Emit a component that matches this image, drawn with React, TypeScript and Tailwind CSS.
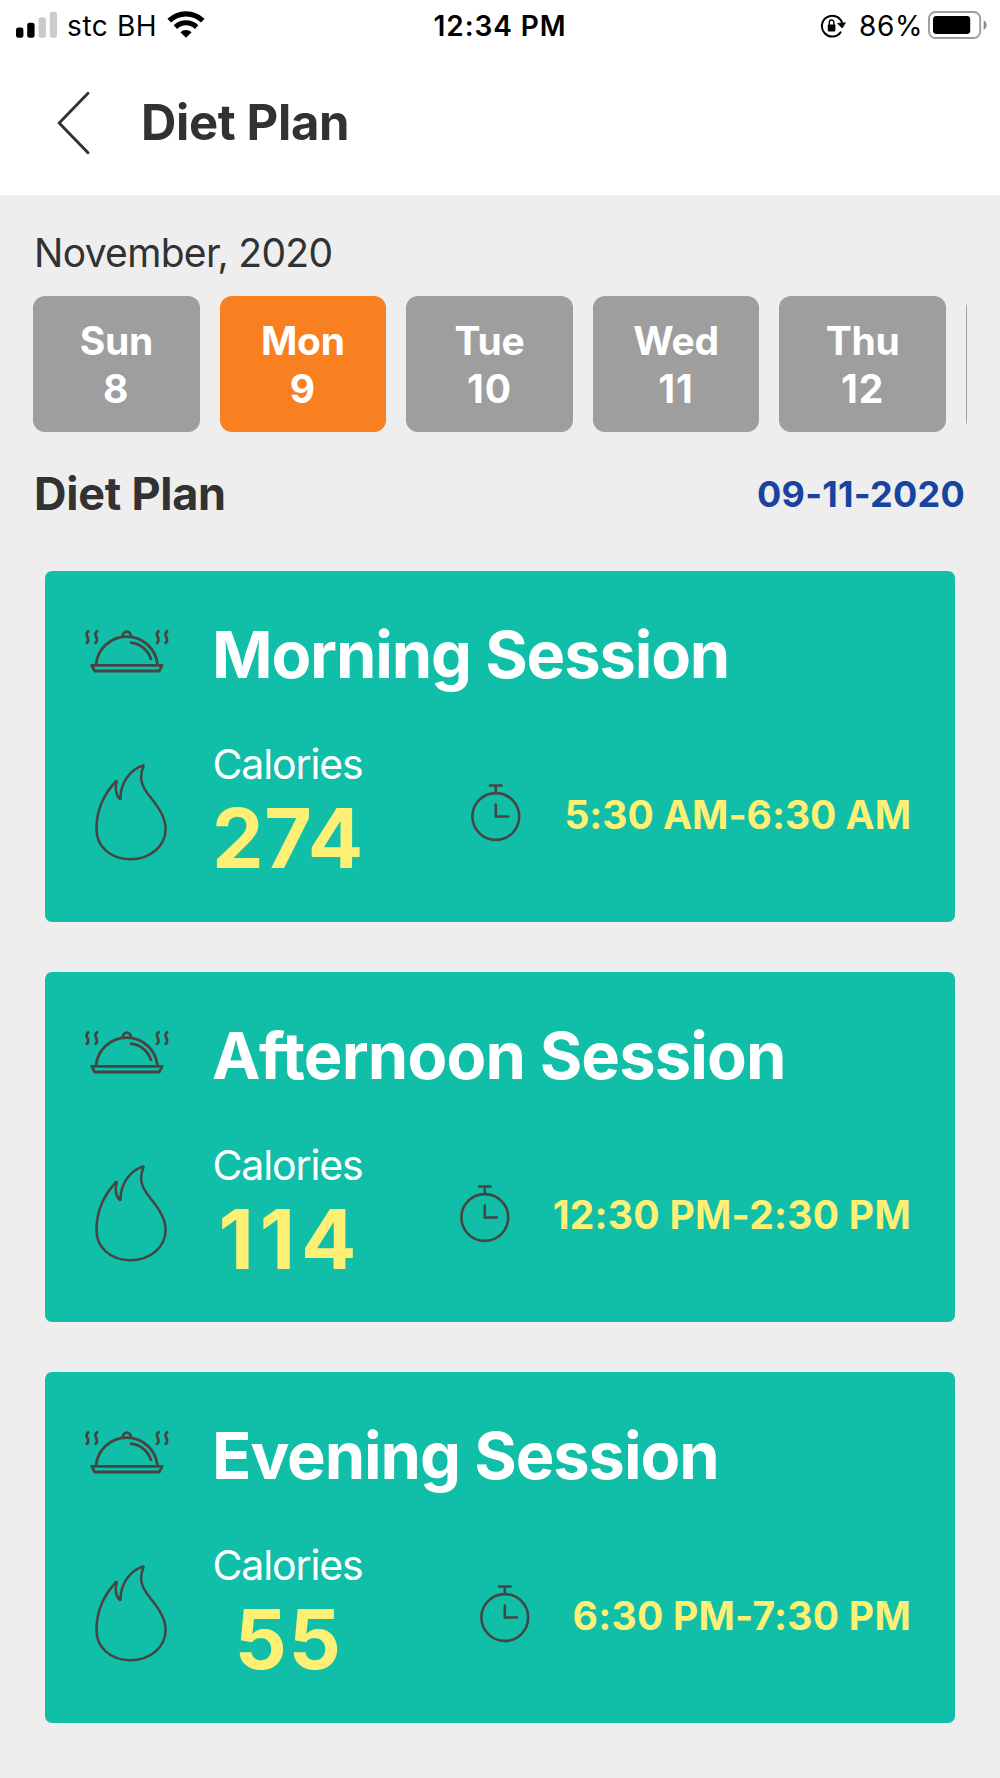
type Day = { name: string; date: number }

type Session = {
  title: string
  titleClass: string
  calories: number
  caloriesClass: string
  time: string
  timeClass: string
}

const days: Day[] = [
  { name: 'Sun', date: 8 },
  { name: 'Mon', date: 9 },
  { name: 'Tue', date: 10 },
  { name: 'Wed', date: 11 },
  { name: 'Thu', date: 12 },
]

const sessions: Session[] = [
  {
    title: 'Morning Session',
    titleClass: 'tracking-[-1.15px]',
    calories: 274,
    caloriesClass: 'tracking-[0.6px]',
    time: '5:30 AM-6:30 AM',
    timeClass: 'tracking-[-0.02px]',
  },
  {
    title: 'Afternoon Session',
    titleClass: 'tracking-[-0.85px]',
    calories: 114,
    caloriesClass: 'tracking-[6px] pl-[6px]',
    time: '12:30 PM-2:30 PM',
    timeClass: 'tracking-[0.27px]',
  },
  {
    title: 'Evening Session',
    titleClass: 'tracking-[-1.1px]',
    calories: 55,
    caloriesClass: 'tracking-[1.5px] pl-[2px]',
    time: '6:30 PM-7:30 PM',
    timeClass: 'tracking-[0.26px]',
  },
]

export default function App() {
  const selected = 9

  return (
    <div className="flex h-[1778px] w-[1000px] flex-col overflow-hidden bg-[#eeeeee] font-['Inter',sans-serif] text-[#323232]">
      <header className="h-[195px] bg-white">
        <StatusBar />
        <div className="flex h-[143px] items-center gap-[50px] pl-[57px]">
          <BackIcon />
          <h1 className="pb-px text-[49px] leading-none font-bold tracking-[-0.36px]">Diet Plan</h1>
        </div>
      </header>

      <main className="px-[33px] pt-8">
        <p className="pl-px text-[39px] leading-[51px] tracking-[-0.68px]">November, 2020</p>

        <div className="mt-[18px] flex gap-[20px] overflow-hidden">
          {days.map((day) => (
            <DayCell key={day.date} day={day} active={day.date === selected} />
          ))}
          {/* edge of the next day peeking in */}
          <div className="h-[136px] w-[166.6px] shrink-0 rounded-xl bg-[#9e9e9e]" />
        </div>

        <div className="mt-[31.5px] flex h-[60px] items-center justify-between pr-[2px] pl-px">
          <h2 className="text-[45px] leading-none font-bold tracking-[-0.25px]">Diet Plan</h2>
          <span className="pt-px text-[36px] leading-none font-bold tracking-[0.25px] text-[#1843a0]">09-11-2020</span>
        </div>

        <div className="mt-[47.5px] flex flex-col gap-[50px] px-3">
          {sessions.map((session) => (
            <SessionCard key={session.title} session={session} />
          ))}
        </div>
      </main>
    </div>
  )
}

function StatusBar() {
  return (
    <div className="grid h-[51px] grid-cols-[1fr_auto_1fr] items-center pr-[13px] pl-4 text-[28px] leading-none text-black">
      <div className="flex items-center gap-[10px]">
        <SignalIcon />
        <span className="tracking-[0.6px]">stc BH</span>
        <WifiIcon />
      </div>
      <span className="mr-[3px] font-semibold tracking-[0.9px]">12:34 PM</span>
      <div className="flex items-center justify-end">
        <RotationLockIcon />
        <span className="mr-[5px] ml-[13px] tracking-[0.6px]">86%</span>
        <BatteryIcon />
      </div>
    </div>
  )
}

function DayCell({ day, active }: { day: Day; active: boolean }) {
  return (
    <div
      className={`flex h-[136px] w-[166.6px] shrink-0 flex-col items-center justify-center rounded-xl pt-[2px] text-[39px] leading-[48px] font-bold text-white ${
        active ? 'bg-[#f88020]' : 'bg-[#9e9e9e]'
      }`}
    >
      <span className="tracking-[-0.3px]">{day.name}</span>
      <span className="tracking-[1px]">{day.date}</span>
    </div>
  )
}

function SessionCard({ session }: { session: Session }) {
  return (
    <section className="h-[350.6px] rounded-[7px] bg-[#11bfa8] pt-[43px]">
      <div className="flex h-[81px] items-center gap-[43px] pl-10">
        <ClocheIcon />
        <h3 className={`text-[65px] leading-none font-bold text-white ${session.titleClass}`}>{session.title}</h3>
      </div>
      <div className="mt-11 flex items-center pr-[44px] pl-[50px]">
        <FlameIcon />
        <div className="ml-[45px] w-[151px] text-center whitespace-nowrap">
          <p className="text-[41px] leading-[50px] tracking-[-1.1px] text-white">Calories</p>
          <p className={`text-[82px] leading-[100px] font-bold text-[#fef074] ${session.caloriesClass}`}>
            {session.calories}
          </p>
        </div>
        <div className="flex flex-1 items-center justify-end gap-[43px]">
          <StopwatchIcon />
          <span className={`text-[39px] leading-none font-bold whitespace-nowrap text-[#fef074] ${session.timeClass}`}>
            {session.time}
          </span>
        </div>
      </div>
    </section>
  )
}

function BackIcon() {
  return (
    <svg width="34" height="64" viewBox="0 0 34 64" fill="none" stroke="#323232" strokeWidth="2.9" strokeLinecap="round">
      <path d="M31 2.2 2.2 32 31 61.8" />
    </svg>
  )
}

function SignalIcon() {
  return (
    <svg width="41" height="27" viewBox="0 0 41 27" className="mb-[2px]">
      <rect x="0" y="16.5" width="7.4" height="10.3" rx="2.4" />
      <rect x="11.2" y="11.8" width="7.4" height="15" rx="2.4" />
      <rect x="22.5" y="6.3" width="7.4" height="20.5" rx="2.4" fill="#cbcbcb" />
      <rect x="33.8" y="0.8" width="7.2" height="26" rx="2.4" fill="#cbcbcb" />
    </svg>
  )
}

function WifiIcon() {
  return (
    <svg width="38" height="27" viewBox="0 0 38 27" fill="none" stroke="#000" className="mb-[3px]">
      <path d="M2.2 9.6a24.2 24.2 0 0 1 33.6 0" strokeWidth="5.2" />
      <path d="M8.4 16.1a15.2 15.2 0 0 1 21.2 0" strokeWidth="5" />
      <path d="M13.4 21.2a8 8 0 0 1 11.2 0L19 26.8Z" fill="#000" stroke="none" />
    </svg>
  )
}

function RotationLockIcon() {
  return (
    <svg width="26" height="24" viewBox="0 0 26 24" fill="none" stroke="#000">
      <path d="M20.6 18.4A10.4 10.4 0 1 1 21.9 8.2" strokeWidth="2" strokeLinecap="round" />
      <path d="M17.6 9.4 25.4 8.8 22.2 14Z" fill="#000" stroke="#000" strokeWidth="0.8" strokeLinejoin="round" />
      <rect x="7.8" y="10.4" width="7.6" height="7" rx="0.8" fill="#000" stroke="none" />
      <path d="M9.3 11V8.3a2.3 2.3 0 0 1 4.6 0V11" strokeWidth="1.4" />
    </svg>
  )
}

function BatteryIcon() {
  return (
    <svg width="59" height="28" viewBox="0 0 59 28" className="mb-[2px]">
      <rect x="1" y="1" width="51.2" height="26" rx="6.5" fill="none" stroke="#9d9d9d" strokeWidth="1.9" />
      <rect x="5" y="5" width="37.2" height="18" rx="3.4" />
      <path d="M55.6 9.2c4 2 4 7.8 0 9.8Z" fill="#8c8c8c" />
    </svg>
  )
}

function ClocheIcon() {
  return (
    <svg
      width="84"
      height="43"
      viewBox="0 0 84 43"
      fill="none"
      stroke="#464543"
      strokeWidth="2.8"
      className="mb-[6px] overflow-visible"
    >
      {/* steam */}
      <path d="M4.3 .8C1.6 1.6 .9 4.2 2.3 6.8 3.8 9.4 3.6 12.2 .8 13.6" />
      <path d="M13.1 .8C10.4 1.6 9.7 4.2 11.1 6.8 12.6 9.4 12.4 12.2 9.6 13.6" />
      <path d="M74.6 .8C71.9 1.6 71.2 4.2 72.6 6.8 74.1 9.4 73.9 12.2 71.1 13.6" />
      <path d="M83.2 .8C80.5 1.6 79.8 4.2 81.2 6.8 82.7 9.4 82.5 12.2 79.7 13.6" />
      {/* lid and knob */}
      <path d="M11 35V34.5A30.9 30.9 0 0 1 72.5 34.5V35" />
      <path d="M37.7 7C37.7 -.3 46 -.3 46 7" />
      <path d="M45 12.7A23 23 0 0 1 66.2 30" />
      {/* tray */}
      <path d="M6.7 35.3H77.1L74.3 41H9.7Z" strokeLinejoin="round" />
    </svg>
  )
}

function FlameIcon() {
  return (
    <svg
      width="72"
      height="97"
      viewBox="0 0 72 97"
      fill="none"
      stroke="#464543"
      strokeWidth="2.5"
      strokeLinejoin="bevel"
      className="mb-[3px]"
    >
      <path d="M48.8 1.2C43.5 14 46.5 22 54.5 32 62.5 42 70.6 52.5 70.6 65 70.6 82 55.5 95.2 35.3 95.2 15.3 95.2 1.5 82.5 1.5 65 1.5 46 9.5 29 21.8 16.5 19.5 26 21.3 32 25.5 35.6 25 19.5 35 5 48.8 1.2Z" />
    </svg>
  )
}

function StopwatchIcon() {
  return (
    <svg
      width="50"
      height="58"
      viewBox="0 0 50 58"
      fill="none"
      stroke="#464543"
      strokeWidth="2.6"
      strokeLinecap="round"
      className="mb-[2px]"
    >
      <circle cx="24.8" cy="32.5" r="23.4" />
      <path d="M19 1.5H30.5M24.8 1.5V9M24.8 20.5V32.5H37" />
    </svg>
  )
}
